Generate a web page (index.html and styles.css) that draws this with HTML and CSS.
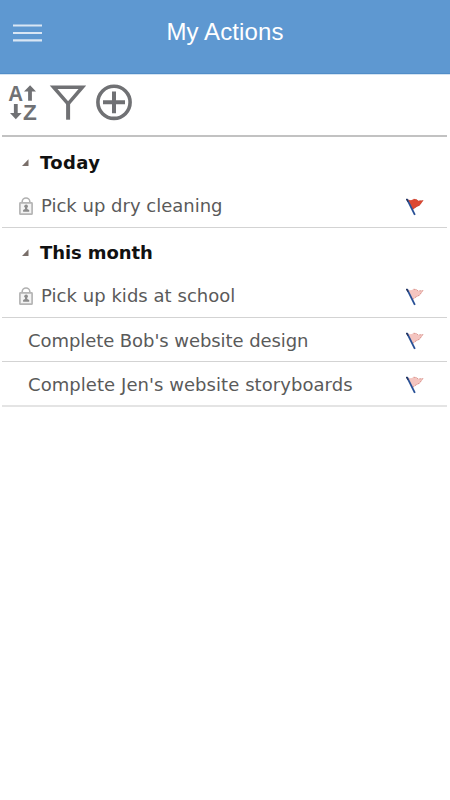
FILE: index.html
```html
<!DOCTYPE html>
<html lang="en">
<head>
<meta charset="utf-8">
<title>My Actions</title>
<link rel="stylesheet" href="styles.css">
</head>
<body>
<svg class="defs" width="0" height="0" aria-hidden="true">
  <symbol id="lock" viewBox="0 0 14 18">
    <path d="M3.2 6.5V4.5a3.8 3.5 0 0 1 7.6 0v2" fill="none" stroke="#b0b0b0" stroke-width="1.6"/>
    <rect x=".9" y="5.8" width="12.2" height="11.4" rx=".6" fill="#f3f3f3" stroke="#b5b5b5" stroke-width="1.7"/>
    <circle cx="7.1" cy="9.3" r="1.8" fill="#8c8c8c"/>
    <path d="M6 10h2.2v2.1l2 .9v1.7H4.1V13l1.9-.9z" fill="#8c8c8c"/>
  </symbol>
  <symbol id="flag" viewBox="0 0 18 18">
    <path d="M1.6 1.6 5 2.2 8.1.9l2.4.3 1.7 1.5 5.3-.5-3.8 5.2-3.2 1.6-3.8 2.8z" fill="currentColor"/>
    <path d="m7.5 1.2 2.9.3 1.6 1.5 5-.5-3.6 4.7-3.1 1.5-3.6 2.7" fill="none" stroke="#a63b30" stroke-opacity=".45" stroke-width=".8" stroke-dasharray="2 1.2"/>
    <path d="m1 1.2 7.9 15.6" stroke="#285096" stroke-width="1.8"/>
    <path d="M.5.8 2 3.7" stroke="#26365f" stroke-width="1.3"/>
  </symbol>
  <symbol id="caret" viewBox="0 0 7 7"><path d="M0 7 6.5.3V7z" fill="#796e69"/></symbol>
</svg>
<header class="header">
  <svg class="menu" viewBox="0 0 30 20"><path d="M0 2.5h29M0 10h29M0 17.4h29" stroke="#d9e6f4" stroke-width="2.1"/></svg>
  <h1 class="title">My Actions</h1>
</header>
<nav class="toolbar">
  <svg class="tool sort" viewBox="0 0 30 38">
    <text class="letter" x="0.3" y="16.6" textLength="14.8" lengthAdjust="spacingAndGlyphs">A</text>
    <text class="letter" x="15" y="35.6" textLength="13.8" lengthAdjust="spacingAndGlyphs">Z</text>
    <path d="M22.1 1.2 28 7.5h-4.1v9.2h-3.8V7.5H16zM5.9 20h3.8v9.1h4L7.8 35.3 2 29.1h3.9z" fill="#707174"/>
  </svg>
  <svg class="tool filter" viewBox="0 0 34 38"><path d="M2.6 3.2h28.8L17.1 19.8z" fill="none" stroke="#707174" stroke-width="3.5"/><path d="M17.1 17.5v18.2" stroke="#707174" stroke-width="4"/></svg>
  <svg class="tool add" viewBox="0 0 36 38"><circle cx="18" cy="18.3" r="16.1" fill="none" stroke="#707174" stroke-width="3.6"/><path d="M18 7.5v21.7M7 18.3h22" stroke="#707174" stroke-width="4"/></svg>
</nav>
<main class="actions">
  <h2 class="group"><svg class="caret"><use href="#caret"/></svg><span class="today">Today</span></h2>
  <div class="row private first"><svg class="lock"><use href="#lock"/></svg><span class="label dry">Pick up dry cleaning</span><svg class="flag red"><use href="#flag"/></svg></div>
  <h2 class="group second"><svg class="caret"><use href="#caret"/></svg><span class="month">This month</span></h2>
  <div class="row private"><svg class="lock"><use href="#lock"/></svg><span class="label kids">Pick up kids at school</span><svg class="flag"><use href="#flag"/></svg></div>
  <div class="row"><span class="label bob">Complete Bob's website design</span><svg class="flag"><use href="#flag"/></svg></div>
  <div class="row last"><span class="label jen">Complete Jen's website storyboards</span><svg class="flag"><use href="#flag"/></svg></div>
</main>
</body>
</html>
```
FILE: styles.css
```css
* { box-sizing: border-box; }
body { margin: 0; background: #fff; font-family: "DejaVu Sans", sans-serif; }
svg { display: block; flex: none; }
.defs { position: absolute; }
.header { display: grid; grid-template-columns: 1fr auto 1fr; height: 75px; padding: 0 13px; background: #5e98d1; border-bottom: 1px solid #d5e4f2; box-shadow: inset 0 -1px #518dc8; background-clip: padding-box; }
.menu { width: 30px; height: 20px; margin-top: 23px; }
.title { margin: 17px 0 0; color: #fff; font: 400 24px/30px "Liberation Sans", sans-serif; letter-spacing: .1px; }
.toolbar { display: flex; height: 62px; margin: 0 3px 0 2px; padding: 9px 0 0 6px; border-bottom: 2px solid #c2c2c2; }
.tool { height: 38px; overflow: visible; }
.sort { width: 30px; }
.letter { font: 700 22.5px "Liberation Sans", sans-serif; fill: #707174; }
.filter { width: 34px; margin-left: 13px; }
.add { width: 36px; margin-left: 11px; }
.actions { margin: 0 3px 0 2px; }
.group { display: flex; align-items: center; height: 46px; margin: 0; padding: 5px 0 0 20px; color: #111; font-size: 18px; line-height: 24px; }
.second { padding-top: 3px; }
.today { letter-spacing: .35px; }
.month { letter-spacing: -.1px; }
.caret { width: 7px; height: 7px; margin-right: 11px; }
.row { display: flex; align-items: center; height: 44px; padding: 1px 23px 0 26px; border-bottom: 1px solid #d3d3d3; color: #5a5a5a; font-size: 18px; line-height: 24px; }
.row.first { height: 45px; padding-top: 2px; }
.row.last { height: 45px; border-bottom: 2px solid #e4e4e4; }
.row.private { padding-left: 17px; }
.lock { width: 14px; height: 18px; margin-right: 8px; }
.label { flex: 1; margin-top: 1px; white-space: nowrap; }
.private .label { margin-top: 0; }
.kids { letter-spacing: .04px; }
.bob { letter-spacing: -.07px; }
.jen { letter-spacing: .06px; }
.flag { width: 18px; height: 18px; margin-top: 2px; color: #f4c5c0; }
.red { color: #dc4933; }
```
